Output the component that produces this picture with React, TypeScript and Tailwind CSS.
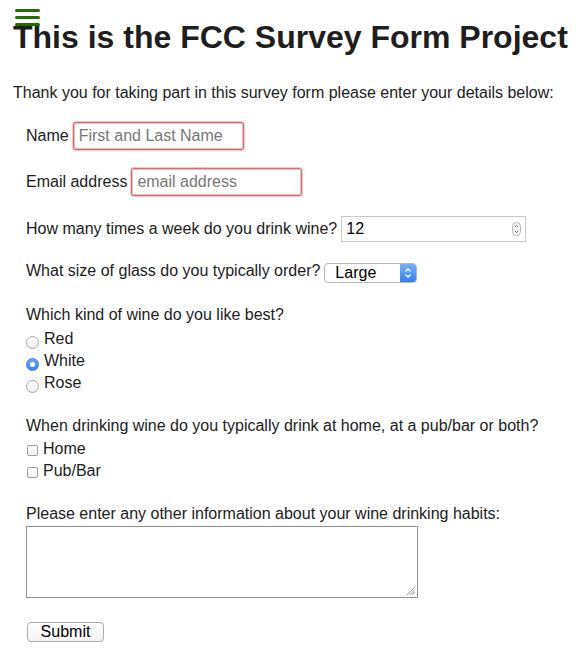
import React from "react";

function Radio({ checked }: { checked?: boolean }) {
  if (checked) {
    return (
      <span className="mt-[6px] flex h-[13px] w-[13px] items-center justify-center rounded-full border border-[#3b7de0] bg-gradient-to-b from-[#6aa8f7] to-[#3c82ec]">
        <span className="h-[5px] w-[5px] rounded-full bg-white" />
      </span>
    );
  }
  return (
    <span className="mt-[6px] block h-[13px] w-[13px] rounded-full border border-[#a9a9a9] bg-gradient-to-b from-white to-[#f0f0f0]" />
  );
}

function Check() {
  return <span className="mt-[6px] block h-[11px] w-[11px] rounded-[2px] border border-[#a0a0a0] bg-gradient-to-b from-white to-[#f2f2f2]" />;
}

export default function App() {
  return (
    <div className="relative min-h-[649px] bg-white pl-[13px] font-['Liberation_Sans',Arial,sans-serif] text-[16px] text-[#1c1c1c]">
      <div className="absolute left-[15px] top-[9px] z-10 flex flex-col gap-[4px]">
        <span className="block h-[3px] w-[25px] rounded-full bg-[#256b00]" />
        <span className="block h-[3px] w-[25px] rounded-full bg-[#256b00]" />
        <span className="block h-[3px] w-[25px] rounded-full bg-[#256b00]" />
      </div>

      <h1 className="pt-[19px] text-[32px] font-bold leading-[37px] text-[#1e1e1e]">
        This is the FCC Survey Form Project
      </h1>

      <p className="mt-[28px] leading-[18px]">
        Thank you for taking part in this survey form please enter your details below:
      </p>

      <form className="ml-[13px] flex flex-col leading-[18px]">
        <div className="mt-[20px] flex h-[27px] items-center">
          <label>Name</label>
          <input
            type="text"
            placeholder="First and Last Name"
            className="ml-[5px] h-[26px] w-[169px] rounded-[2px] border border-[#c9c9c9] px-[4px] text-[16px] shadow-[0_0_0_1px_#ee6767,0_0_0_2px_#f9c4c4] outline-none placeholder:text-[#777]"
          />
        </div>

        <div className="mt-[19px] flex h-[27px] items-center">
          <label>Email address</label>
          <input
            type="text"
            placeholder="email address"
            className="ml-[5px] h-[26px] w-[169px] rounded-[2px] border border-[#c9c9c9] px-[4px] text-[16px] shadow-[0_0_0_1px_#ee6767,0_0_0_2px_#f9c4c4] outline-none placeholder:text-[#777]"
          />
        </div>

        <div className="mt-[21px] flex h-[26px] items-center">
          <label>How many times a week do you drink wine?</label>
          <div className="relative ml-[4px]">
            <input
              type="text"
              defaultValue="12"
              readOnly
              className="h-[26px] w-[185px] border border-[#c8c8c8] px-[4px] text-[16px] text-black outline-none"
            />
            <svg className="absolute right-[5px] top-[6px]" width="9" height="14" viewBox="0 0 9 14">
              <rect x="0.5" y="0.5" width="8" height="13" rx="4" fill="#fafafa" stroke="#b5b5b5" />
              <path d="M2.8 5.2 L4.5 3.4 L6.2 5.2" fill="none" stroke="#555" strokeWidth="0.9" />
              <path d="M2.8 8.8 L4.5 10.6 L6.2 8.8" fill="none" stroke="#555" strokeWidth="0.9" />
            </svg>
          </div>
        </div>

        <div className="mt-[20px] flex items-start">
          <label>What size of glass do you typically order?</label>
          <div className="ml-[4px] mt-[1px] flex h-[20px] w-[93px] overflow-hidden rounded-[4px] border border-[#b8b8b8] bg-white">
            <span className="flex-1 pl-[10px] text-[16px] leading-[18px] text-black">Large</span>
            <span className="flex w-[16px] items-center justify-center bg-gradient-to-b from-[#74aef8] to-[#3a7fe9]">
              <svg width="8" height="12" viewBox="0 0 8 12">
                <path d="M1.5 4.5 L4 2 L6.5 4.5" fill="none" stroke="#fff" strokeWidth="1.3" />
                <path d="M1.5 7.5 L4 10 L6.5 7.5" fill="none" stroke="#fff" strokeWidth="1.3" />
              </svg>
            </span>
          </div>
        </div>

        <p className="mt-[23px]">Which kind of wine do you like best?</p>
        <div className="mt-[4px] flex flex-col">
          <label className="flex h-[22px] items-start gap-[5px] pt-[2px]">
            <Radio />
            <span className="-mt-[2px] leading-[22px]">Red</span>
          </label>
          <label className="flex h-[22px] items-start gap-[5px] pt-[2px]">
            <Radio checked />
            <span className="-mt-[2px] leading-[22px]">White</span>
          </label>
          <label className="flex h-[22px] items-start gap-[5px] pt-[2px]">
            <Radio />
            <span className="-mt-[2px] leading-[22px]">Rose</span>
          </label>
        </div>

        <p className="mt-[23px]">When drinking wine do you typically drink at home, at a pub/bar or both?</p>
        <div className="mt-[3px] flex flex-col">
          <label className="flex h-[22px] items-start gap-[5px] pl-[1px] pt-[1px]">
            <Check />
            <span className="-mt-[1px] leading-[22px]">Home</span>
          </label>
          <label className="flex h-[22px] items-start gap-[5px] pl-[1px] pt-[1px]">
            <Check />
            <span className="-mt-[1px] leading-[22px]">Pub/Bar</span>
          </label>
        </div>

        <p className="mt-[23px]">Please enter any other information about your wine drinking habits:</p>
        <div className="relative mt-[3px] h-[72px] w-[392px]">
          <textarea className="block h-[72px] w-[392px] resize-none border border-[#8f8f8f] outline-none" />
          <svg className="absolute bottom-[2px] right-[2px]" width="10" height="10" viewBox="0 0 10 10">
            <path d="M1 9 L9 1 M3.5 9 L9 3.5 M6 9 L9 6" stroke="#8a8a8a" strokeWidth="0.9" />
          </svg>
        </div>

        <div className="mt-[24px] pl-[1px]">
          <button
            type="button"
            className="flex h-[20px] w-[77px] items-center justify-center rounded-[4px] border border-[#adadad] bg-gradient-to-b from-white to-[#f4f4f4] text-[16px] leading-[18px] text-black"
          >
            Submit
          </button>
        </div>
      </form>
    </div>
  );
}
